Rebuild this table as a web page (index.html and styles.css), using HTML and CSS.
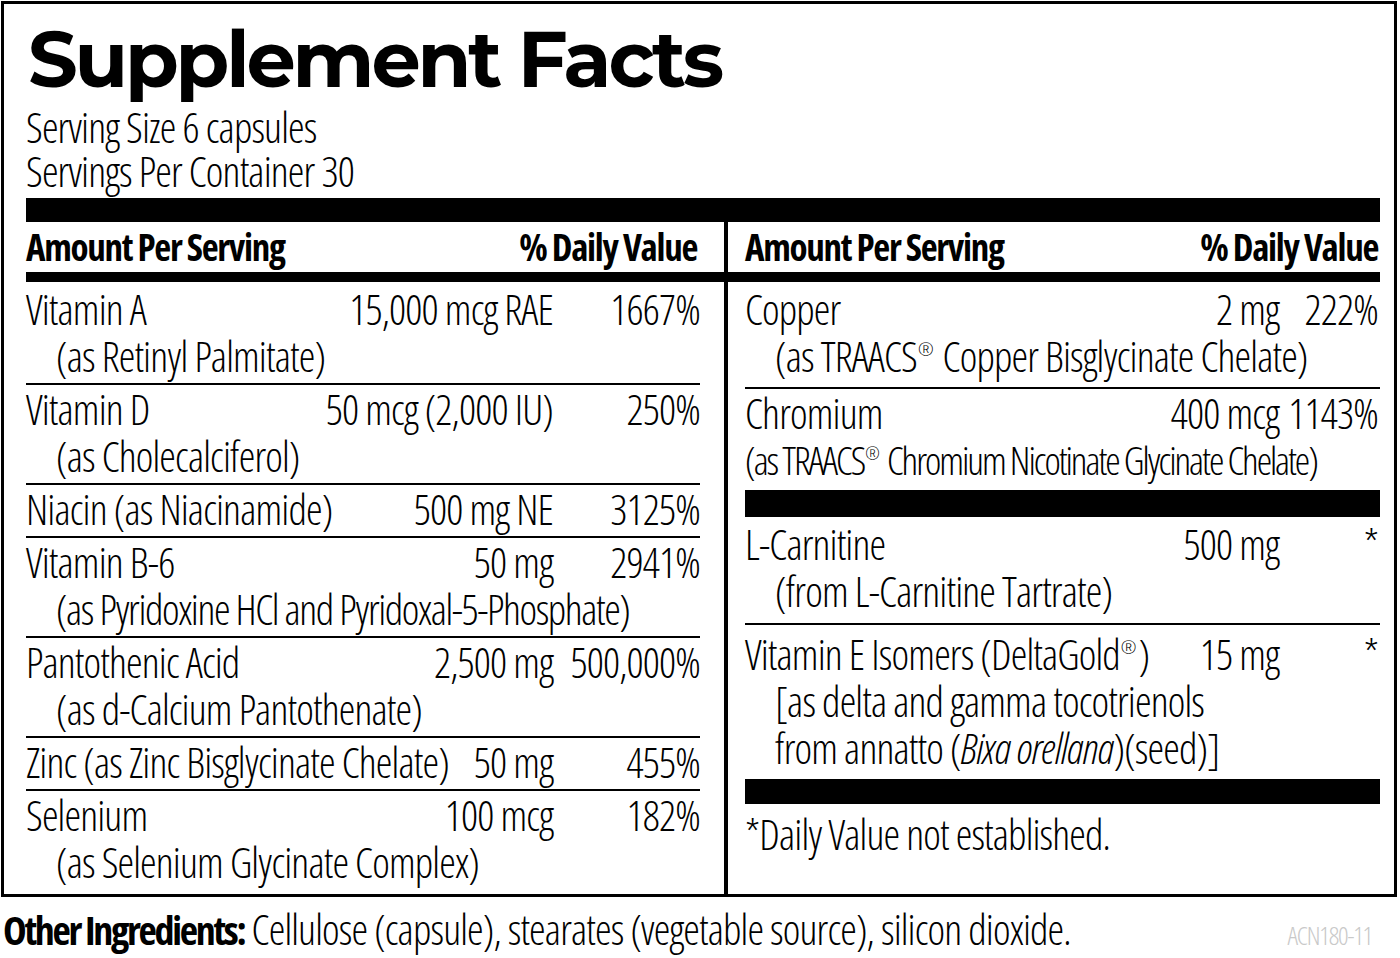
FILE: index.html
```html
<!DOCTYPE html>
<html lang="en">
<head>
<meta charset="utf-8">
<title>Supplement Facts</title>
<link rel="stylesheet" href="styles.css">
</head>
<body>
<div class="label">
  <h1 class="title">Supplement Facts</h1>
  <div class="serving">
    <div>Serving Size 6 capsules</div>
    <div>Servings Per Container 30</div>
  </div>
  <div class="bar bar-top"></div>
  <div class="facts">
    <div class="col-head head-left"><span>Amount Per Serving</span><span>% Daily Value</span></div>
    <div class="divider"></div>
    <div class="col-head head-right"><span>Amount Per Serving</span><span>% Daily Value</span></div>
    <div class="head-rule"></div>

    <div class="col col-left">
      <div class="row first">
        <div class="main"><span class="name">Vitamin A</span><span class="amt">15,000 mcg RAE</span><span class="dv">1667%</span></div>
        <div class="sub">(as Retinyl Palmitate)</div>
      </div>
      <div class="row">
        <div class="main"><span class="name">Vitamin D</span><span class="amt">50 mcg (2,000 IU)</span><span class="dv">250%</span></div>
        <div class="sub">(as Cholecalciferol)</div>
      </div>
      <div class="row">
        <div class="main"><span class="name">Niacin (as Niacinamide)</span><span class="amt">500 mg NE</span><span class="dv">3125%</span></div>
      </div>
      <div class="row">
        <div class="main"><span class="name">Vitamin B-6</span><span class="amt">50 mg</span><span class="dv">2941%</span></div>
        <div class="sub sub-long">(as Pyridoxine HCl and Pyridoxal-5-Phosphate)</div>
      </div>
      <div class="row">
        <div class="main"><span class="name">Pantothenic Acid</span><span class="amt">2,500 mg</span><span class="dv">500,000%</span></div>
        <div class="sub">(as d-Calcium Pantothenate)</div>
      </div>
      <div class="row">
        <div class="main"><span class="name">Zinc (as Zinc Bisglycinate Chelate)</span><span class="amt">50 mg</span><span class="dv">455%</span></div>
      </div>
      <div class="row last">
        <div class="main"><span class="name">Selenium</span><span class="amt">100 mcg</span><span class="dv">182%</span></div>
        <div class="sub">(as Selenium Glycinate Complex)</div>
      </div>
    </div>

    <div class="col col-right">
      <div class="row r-copper">
        <div class="main"><span class="name">Copper</span><span class="amt">2 mg</span><span class="dv">222%</span></div>
        <div class="sub">(as TRAACS<sup class="reg">®</sup> Copper Bisglycinate Chelate)</div>
      </div>
      <div class="row r-chromium">
        <div class="main"><span class="name">Chromium</span><span class="amt">400 mcg</span><span class="dv">1143%</span></div>
        <div class="sub sub-tight">(as TRAACS<sup class="reg">®</sup> Chromium Nicotinate Glycinate Chelate)</div>
      </div>
      <div class="bar bar-mid"></div>
      <div class="row r-carnitine">
        <div class="main"><span class="name">L-Carnitine</span><span class="amt">500 mg</span><span class="dv star">*</span></div>
        <div class="sub">(from L-Carnitine Tartrate)</div>
      </div>
      <div class="row r-vite">
        <div class="main"><span class="name">Vitamin E Isomers (DeltaGold<sup class="reg">®</sup>)</span><span class="amt">15 mg</span><span class="dv star">*</span></div>
        <div class="sub">[as delta and gamma tocotrienols</div>
        <div class="sub">from annatto (<i>Bixa orellana</i>)(seed)]</div>
      </div>
      <div class="bar bar-low"></div>
      <div class="footnote">*Daily Value not established.</div>
    </div>
  </div>
</div>
<div class="other">
  <p class="other-text"><b>Other Ingredients:</b> Cellulose (capsule), stearates (vegetable source), silicon dioxide.</p>
  <span class="code">ACN180-11</span>
</div>
</body>
</html>
```
FILE: styles.css
```css
html, body {
  margin: 0;
  padding: 0;
  background: #fff;
  color: #000;
}
body {
  font-family: "Open Sans", "Liberation Sans", sans-serif;
  font-stretch: 75%;
  font-weight: 350;
  font-size: 42px;
  letter-spacing: -0.85px;
  width: 1400px;
  height: 958px;
  overflow: hidden;
}

.label {
  box-sizing: border-box;
  margin: 1px 0 0 1px;
  width: 1396px;
  height: 896px;
  border: 3px solid #000;
  padding: 17px 14px 0 22px;
  display: flex;
  flex-direction: column;
}

.title {
  margin: 0;
  font-family: "Montserrat", "Inter", "Liberation Sans", sans-serif;
  font-stretch: normal;
  font-weight: 700;
  font-size: 78px;
  line-height: 76px;
  letter-spacing: -3.2px;
  padding-left: 2px;
}

.serving {
  margin-top: 8px;
  line-height: 44px;
}

.bar { background: #000; }
.bar-top { margin-top: 5px; height: 24px; }

.facts {
  flex: 1;
  display: grid;
  grid-template-columns: 674px 24px 4px 17px 1fr;
  grid-template-rows: 50px 10px 1fr;
}

.col-head {
  display: flex;
  justify-content: space-between;
  font-weight: 750;
  font-size: 37px;
  line-height: 50px;
  letter-spacing: -1.3px;
  grid-row: 1;
}
.head-left { grid-column: 1; padding-right: 3px; }
.head-right { grid-column: 5; padding-right: 2px; }
.divider { grid-column: 3; grid-row: 1 / 4; background: #000; }
.head-rule { grid-column: 1 / -1; grid-row: 2; background: #000; }

.col { grid-row: 3; display: flex; flex-direction: column; line-height: 47px; }
.col-left { grid-column: 1; }
.col-right { grid-column: 5; }

.row { padding: 0 0 4px; border-bottom: 2px solid #000; }
.row.first { padding-top: 3px; }
.row.last { border-bottom: 0; }

.main { display: grid; white-space: nowrap; }
.col-left .main { grid-template-columns: 1fr auto 147px; }
.col-right .main { grid-template-columns: 1fr auto 99px; padding-right: 2px; }
.amt, .dv { text-align: right; }
.sub { padding-left: 30px; white-space: nowrap; }
.sub-long { letter-spacing: -1.4px; }
.sub-tight { padding-left: 0; font-size: 39px; letter-spacing: -2.05px; }

.reg {
  font-size: 0.45em;
  line-height: 0;
  vertical-align: 0.85em;
  letter-spacing: 0;
  margin: 0 2px 0 1px;
}

.r-copper { padding: 3px 0 8px; }
.r-chromium { padding: 0 0 7px; border-bottom: 0; }
.bar-mid { height: 27px; }
.r-carnitine { padding: 3px 0 9px; }
.r-vite { padding: 5px 0 8px; border-bottom: 0; }
.bar-low { height: 25px; }
.footnote { padding-top: 6px; }

.other {
  display: flex;
  justify-content: space-between;
  align-items: baseline;
  margin-top: 8px;
  padding: 0 28px 0 3px;
  line-height: 47px;
}
.other-text { margin: 0; white-space: nowrap; }
.other-text b { font-weight: 700; font-size: 40px; letter-spacing: -2.3px; }
.code {
  color: #c9c9c9;
  font-size: 26px;
  letter-spacing: -1.2px;
}
```
